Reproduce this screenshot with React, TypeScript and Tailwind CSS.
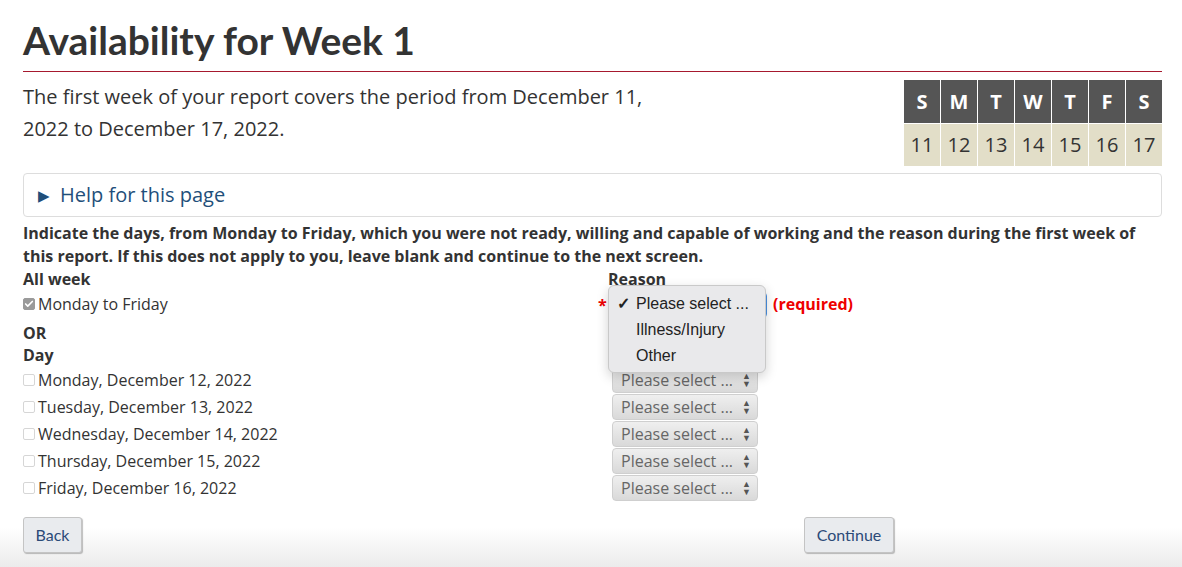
import { Check } from "lucide-react"

const days = [
  { d: "S", n: 11 },
  { d: "M", n: 12 },
  { d: "T", n: 13 },
  { d: "W", n: 14 },
  { d: "T", n: 15 },
  { d: "F", n: 16 },
  { d: "S", n: 17 },
]

const weekdays = [
  "Monday, December 12, 2022",
  "Tuesday, December 13, 2022",
  "Wednesday, December 14, 2022",
  "Thursday, December 15, 2022",
  "Friday, December 16, 2022",
]

const openSans = "font-['Open_Sans',sans-serif]"
const lato = "font-['Lato',sans-serif]"

function Box({ checked }: { checked?: boolean }) {
  return (
    <span
      className={`mr-[3px] inline-flex h-[12px] w-[12px] shrink-0 items-center justify-center rounded-[2px] border ${
        checked ? "border-[#9a9a9a] bg-[#9a9a9a]" : "border-[#d6d6d6] bg-white"
      }`}
    >
      {checked && <Check className="h-[10px] w-[10px] text-white" strokeWidth={4} />}
    </span>
  )
}

function Select({ focused }: { focused?: boolean }) {
  return (
    <div
      className={`flex h-[26px] items-center justify-between rounded-[4px] border bg-[linear-gradient(to_bottom,#efefef,#d9d9d9)] pl-[8px] pr-[6px] text-[16px] text-[#666] ${
        focused ? "w-[155px] border-[#4a90e2]" : "w-[146px] border-[#cfcfcf]"
      }`}
    >
      <span className="leading-none">Please select ...</span>
      <span className="flex flex-col text-[9px] leading-[8px] text-[#555]">
        <span>▲</span>
        <span>▼</span>
      </span>
    </div>
  )
}

export default function App() {
  return (
    <div
      className={`relative min-h-[567px] w-[1182px] bg-[linear-gradient(to_bottom,#ffffff_93%,#ebebeb)] ${openSans} text-[#333]`}
    >
      <div className="ml-[23px] w-[1139px]">
        <h1
          className={`${lato} border-b border-[#a6192e] pt-[20px] pb-[11px] text-[39px] font-bold leading-[40px] text-[#333]`}
        >
          Availability for Week 1
        </h1>

        <div className="mt-[8px] flex justify-between">
          <p className="mt-[1px] max-w-[650px] text-[20px] leading-[32px]">
            The first week of your report covers the period from December 11, 2022 to December 17, 2022.
          </p>
          <div className="grid grid-cols-[repeat(7,36px)] gap-[1px] bg-white">
            {days.map((x, i) => (
              <div
                key={"h" + i}
                className="flex h-[43px] items-center justify-center bg-[#555] text-[20px] font-bold text-white"
              >
                {x.d}
              </div>
            ))}
            {days.map((x, i) => (
              <div
                key={"n" + i}
                className="flex h-[42px] items-center justify-center bg-[#e2dec8] text-[20px] text-[#333]"
              >
                {x.n}
              </div>
            ))}
          </div>
        </div>

        <div className="mt-[7px] flex h-[44px] items-center rounded-[4px] border border-[#dddddd] pl-[14px] text-[20px] text-[#1f4f7a]">
          <span className="mr-[10px] text-[15px]">▶</span>
          Help for this page
        </div>

        <p className="mt-[5px] text-[16px] font-bold leading-[23px]">
          Indicate the days, from Monday to Friday, which you were not ready, willing and capable of working and the reason during the first week of this report. If this does not apply to you, leave blank and continue to the next screen.
        </p>

        <div className="relative grid grid-cols-[585px_1fr] text-[16px]">
          <div className="h-[23px] font-bold leading-[23px]">All week</div>
          <div className="h-[23px] font-bold leading-[23px]">Reason</div>

          <div className="flex h-[26px] items-center">
            <Box checked />
            Monday to Friday
          </div>
          <div className="relative flex h-[26px] items-center">
            <span className="absolute left-[-10px] top-[2px] font-bold text-[#e00]">*</span>
            <div className="ml-[4px] mt-[2px]">
              <Select focused />
            </div>
            <span className="ml-[6px] font-bold text-[#e00]">(required)</span>

            <div className="absolute left-0 top-[-6px] z-10 w-[158px] rounded-[6px] border border-[#c9c9c9] bg-[#e9e9eb] pt-[5px] pb-[3px] font-['Liberation_Sans',sans-serif] text-[16px] text-[#222] shadow-[0_4px_12px_rgba(0,0,0,0.18)]">
              <div className="flex h-[26px] items-center">
                <span className="w-[27px] pl-[8px] text-[16px] font-bold">✓</span>
                Please select ...
              </div>
              <div className="flex h-[26px] items-center pl-[27px]">Illness/Injury</div>
              <div className="flex h-[26px] items-center pl-[27px]">Other</div>
            </div>
          </div>

          <div className="col-span-2 h-[27px] pt-[5px] font-bold leading-[22px]">OR</div>
          <div className="col-span-2 h-[22px] font-bold leading-[22px]">Day</div>

          {weekdays.map((w) => (
            <div key={w} className="contents">
              <div className="flex h-[27px] items-center">
                <Box />
                {w}
              </div>
              <div className="flex h-[27px] items-center pl-[4px]">
                <Select />
              </div>
            </div>
          ))}
        </div>

        <div className={`mt-[16px] grid grid-cols-[781px_1fr] ${lato} text-[16px]`}>
          <div>
            <button className="h-[36px] w-[59px] rounded-[3px] border border-[#c4c4c4] bg-[#e9ebee] text-[#2b4a78] shadow-[1px_1px_1px_rgba(0,0,0,0.25)]">
              Back
            </button>
          </div>
          <div>
            <button className="h-[36px] w-[90px] rounded-[3px] border border-[#c4c4c4] bg-[#e9ebee] text-[#2b4a78] shadow-[1px_1px_1px_rgba(0,0,0,0.25)]">
              Continue
            </button>
          </div>
        </div>
      </div>
    </div>
  )
}
